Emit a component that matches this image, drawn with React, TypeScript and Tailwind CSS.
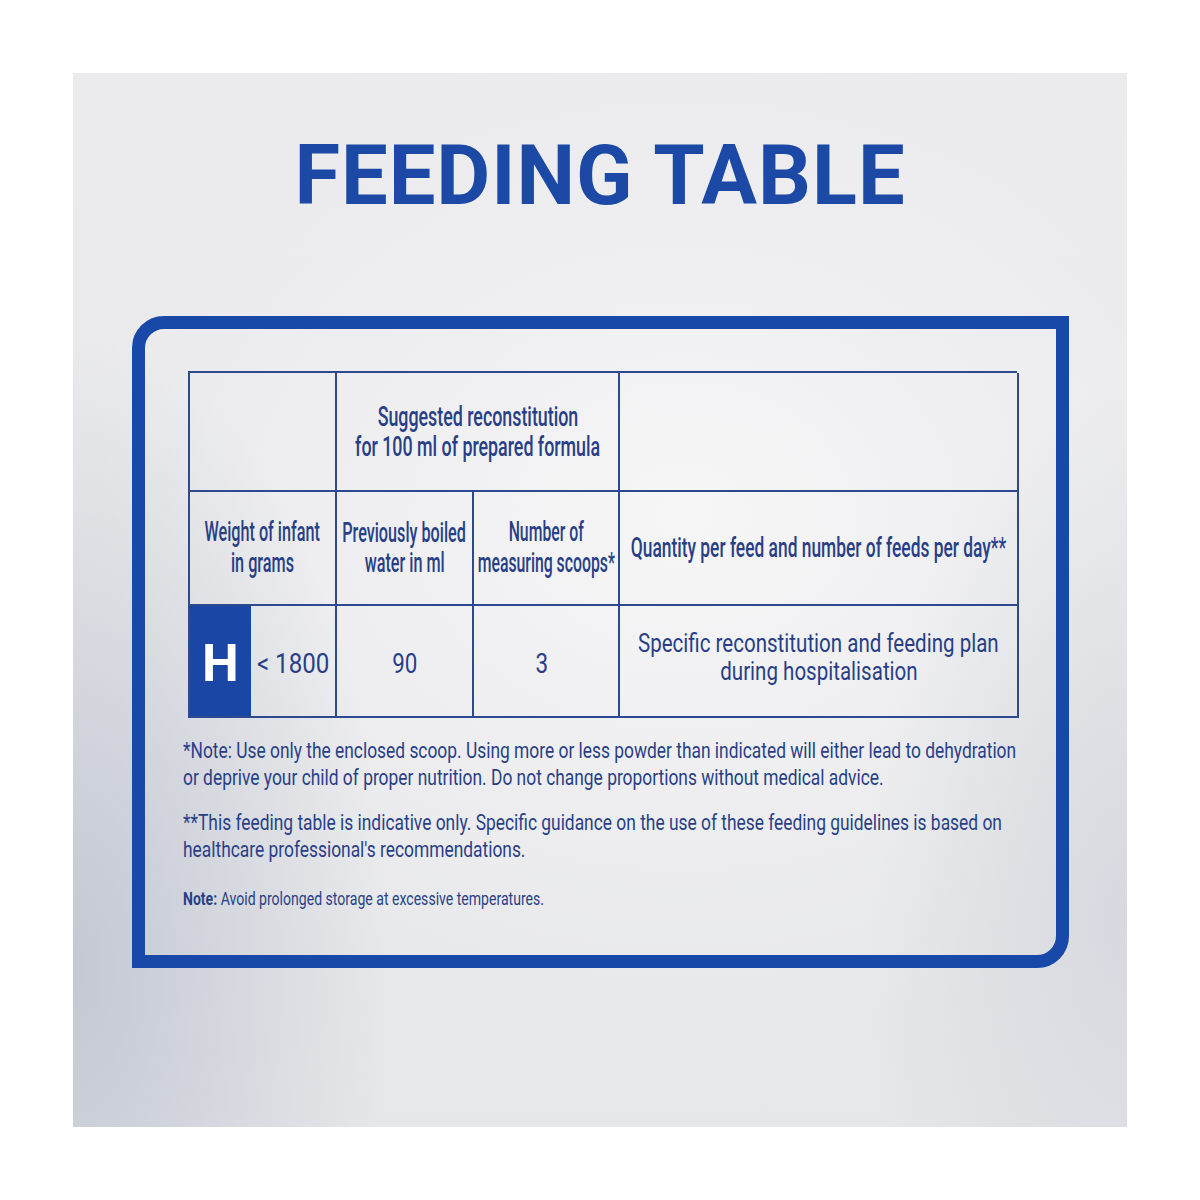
import type { ReactNode } from 'react';

// condensed look: Roboto squeezed horizontally
const Fit = ({ children, className = '' }: { children: ReactNode; className?: string }) => (
  <span className={`inline-block whitespace-nowrap ${className}`}>{children}</span>
);

const cell = 'flex flex-col items-center justify-center border-r-2 border-b-2 border-[#2e4a8e] text-center';

export default function App() {
  return (
    <div className="w-[1200px] h-[1200px] bg-white p-[73px] font-['Roboto',sans-serif] text-[#283f86]">
      <div className="flex h-[1054px] w-[1054px] flex-col bg-[radial-gradient(ellipse_30%_60%_at_0%_85%,#c3c8d2_0%,rgba(200,205,214,0)_100%),radial-gradient(ellipse_25%_50%_at_100%_80%,#d6d9df_0%,rgba(214,217,223,0)_100%),radial-gradient(ellipse_70%_55%_at_58%_42%,#f6f6f7_0%,#eeeef0_50%,rgba(236,236,238,0)_90%),linear-gradient(180deg,#ebebed_0%,#e6e7ea_100%)] pt-[61px]">
        <h1 className="text-center text-[83px] font-bold leading-none tracking-[1px] text-[#1b49a5]">FEEDING TABLE</h1>

        <div className="ml-[59px] mt-[99px] h-[652px] w-[937px] rounded-tl-[32px] rounded-br-[32px] border-[13px] border-[#1848a8] pl-[43px] pt-[42px]">
          <div className="grid w-[829px] grid-cols-[147px_137px_146px_399px] grid-rows-[119px_114px_112px] border-t-2 border-l-2 border-[#2e4a8e]">
            <div className={cell} />
            <div className={`${cell} col-span-2 text-[27px] font-medium leading-[30px]`}>
              <Fit className="scale-x-[0.66]">Suggested reconstitution</Fit>
              <Fit className="scale-x-[0.66]">for 100 ml of prepared formula</Fit>
            </div>
            <div className={cell} />

            <div className={`${cell} text-[27px] font-medium leading-[31px]`}>
              <Fit className="scale-x-[0.6]">Weight of infant</Fit>
              <Fit className="scale-x-[0.6]">in grams</Fit>
            </div>
            <div className={`${cell} text-[27px] font-medium leading-[30px]`}>
              <Fit className="scale-x-[0.6]">Previously boiled</Fit>
              <Fit className="scale-x-[0.6]">water in ml</Fit>
            </div>
            <div className={`${cell} text-[27px] font-medium leading-[31px]`}>
              <Fit className="scale-x-[0.585]">Number of</Fit>
              <Fit className="scale-x-[0.585]">measuring scoops*</Fit>
            </div>
            <div className={`${cell} text-[27px] font-medium`}>
              <Fit className="scale-x-[0.644]">Quantity per feed and number of feeds per day**</Fit>
            </div>

            <div className="flex border-r-2 border-b-2 border-[#2e4a8e]">
              <div className="flex w-[61px] items-center justify-center bg-[#1a47a5] pt-[6px] text-[52px] font-bold text-white">H</div>
              <div className="flex flex-1 items-center justify-center pt-[6px] text-[28px]">
                <Fit className="scale-x-[0.86]">&lt; 1800</Fit>
              </div>
            </div>
            <div className={`${cell} pt-[6px] text-[28px]`}>
              <Fit className="scale-x-[0.8]">90</Fit>
            </div>
            <div className={`${cell} pt-[6px] pr-[8px] text-[28px]`}>
              <Fit className="scale-x-[0.8]">3</Fit>
            </div>
            <div className={`${cell} pb-[8px] text-[26px] leading-[28px]`}>
              <Fit className="scale-x-[0.79]">Specific reconstitution and feeding plan</Fit>
              <Fit className="scale-x-[0.79]">during hospitalisation</Fit>
            </div>
          </div>

          <div className="-ml-[5px] mt-[19px] w-[840px]">
            <p className="text-[22px] leading-[27px]">
              <Fit className="origin-left scale-x-[0.79]">*Note: Use only the enclosed scoop. Using more or less powder than indicated will either lead to dehydration</Fit>
              <br />
              <Fit className="origin-left scale-x-[0.79]">or deprive your child of proper nutrition. Do not change proportions without medical advice.</Fit>
            </p>
            <p className="mt-[18px] text-[22px] leading-[27px]">
              <Fit className="origin-left scale-x-[0.79]">**This feeding table is indicative only. Specific guidance on the use of these feeding guidelines is based on</Fit>
              <br />
              <Fit className="origin-left scale-x-[0.79]">healthcare professional's recommendations.</Fit>
            </p>
            <p className="mt-[24px] text-[19px] leading-[24px]">
              <Fit className="origin-left scale-x-[0.74]">
                <span className="font-bold">Note:</span> Avoid prolonged storage at excessive temperatures.
              </Fit>
            </p>
          </div>
        </div>
      </div>
    </div>
  );
}
